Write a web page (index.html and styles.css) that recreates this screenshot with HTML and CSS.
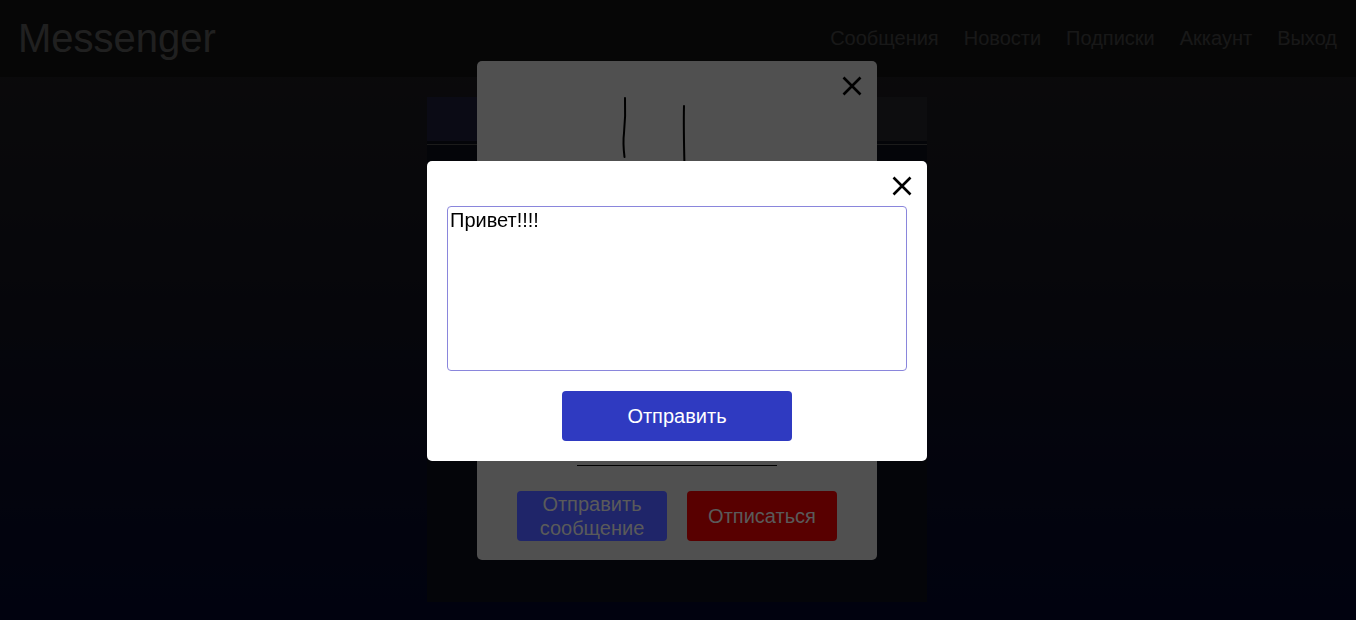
FILE: index.html
```html
<!DOCTYPE html>
<html lang="ru">
<head>
<meta charset="utf-8">
<title>Messenger</title>
<link rel="stylesheet" href="styles.css">
</head>
<body>
<header class="topbar">
  <div class="brand">Messenger</div>
  <nav class="nav">
    <a href="#">Сообщения</a>
    <a href="#">Новости</a>
    <a href="#">Подписки</a>
    <a href="#">Аккаунт</a>
    <a href="#">Выход</a>
  </nav>
</header>

<main class="content">
  <section class="card">
    <div class="card-tabs">
      <div class="card-tab card-tab-active"></div>
      <div class="card-tab"></div>
    </div>
    <div class="card-line"></div>
    <div class="card-body"></div>
  </section>
</main>

<div class="overlay">
  <div class="modal profile-modal">
    <button class="close" aria-label="Закрыть">
      <svg width="24" height="24" viewBox="0 0 24 24"><path d="M3.5 3.5 L20.5 20.5 M20.5 3.5 L3.5 20.5" stroke="#000" stroke-width="2.6" fill="none"/></svg>
    </button>
    <svg class="avatar" width="360" height="357" viewBox="0 0 360 357">
      <path d="M128 17 C128.5 30 128 42 127 52 C126 60 126.5 68 127.5 76" stroke="#000" stroke-width="2" fill="none" stroke-linecap="round"/>
      <path d="M187 25 C186.5 45 187 65 187.5 85 C188 100 187.5 115 187 130" stroke="#000" stroke-width="2" fill="none" stroke-linecap="round"/>
    </svg>
    <div class="profile-name">Кузнецов</div>
    <div class="profile-actions">
      <button class="btn btn-blue">Отправить сообщение</button>
      <button class="btn btn-red">Отписаться</button>
    </div>
  </div>
</div>

<div class="overlay">
  <div class="modal message-modal">
    <button class="close" aria-label="Закрыть">
      <svg width="24" height="24" viewBox="0 0 24 24"><path d="M3.5 3.5 L20.5 20.5 M20.5 3.5 L3.5 20.5" stroke="#000" stroke-width="2.6" fill="none"/></svg>
    </button>
    <textarea class="message-input">Привет!!!!</textarea>
    <button class="send-btn">Отправить</button>
  </div>
</div>
</body>
</html>
```

FILE: styles.css
```css
html, body {
  margin: 0;
  padding: 0;
}

body {
  min-height: 100vh;
  font-family: "Liberation Sans", Arial, sans-serif;
  background: linear-gradient(to bottom, #2e2c30 0%, #1c1c2c 45%, #040a3e 100%);
  overflow: hidden;
}

.topbar {
  height: 77px;
  box-sizing: border-box;
  display: flex;
  align-items: center;
  justify-content: space-between;
  padding: 0 19px 0 18px;
  background: #1a1a1a;
}

.brand {
  font-size: 40px;
  color: #828282;
}

.nav {
  display: flex;
  gap: 25px;
  font-size: 20px;
}

.nav a {
  color: #626262;
  text-decoration: none;
}

.content {
  display: flex;
  justify-content: center;
  padding: 20px 2px 0 0;
}

.card {
  width: 500px;
  height: 505px;
  display: flex;
  flex-direction: column;
  background: #121424;
}

.card-tabs {
  display: flex;
  height: 44px;
}

.card-tab {
  flex: 1;
  background: #36363c;
}

.card-tab-active {
  background: #2c2c54;
}

.card-line {
  margin-top: 3px;
  height: 1px;
  background: #6c6c6c;
}

.card-body {
  flex: 1;
}

.overlay {
  position: fixed;
  inset: 0;
  box-sizing: border-box;
  padding: 2px 2px 0 0;
  background: rgba(0, 0, 0, 0.5);
  display: flex;
  align-items: center;
  justify-content: center;
}

.modal {
  position: relative;
  box-sizing: border-box;
  border-radius: 5px;
  display: flex;
  flex-direction: column;
  align-items: center;
}

.close {
  position: absolute;
  top: 13px;
  right: 13px;
  width: 24px;
  height: 24px;
  padding: 0;
  border: none;
  background: none;
  cursor: pointer;
}

.close svg {
  display: block;
}

.profile-modal {
  width: 400px;
  padding: 20px 20px 19px;
  margin-bottom: 1px;
  background: #a0a0a0;
}

.avatar {
  display: block;
}

.profile-name {
  width: 200px;
  text-align: center;
  font-size: 20px;
  line-height: 23px;
  padding-bottom: 4px;
  border-bottom: 1px solid #000;
  color: #000;
}

.profile-actions {
  display: flex;
  gap: 20px;
  margin-top: 25px;
}

.btn {
  width: 150px;
  height: 50px;
  border: none;
  border-radius: 4px;
  padding: 0 10px;
  font-family: "Liberation Sans", Arial, sans-serif;
  font-size: 20px;
  line-height: 24px;
  color: #b4b4b4;
}

.btn-blue {
  background: #3e4ad2;
}

.btn-red {
  background: #b00000;
}

.message-modal {
  width: 500px;
  height: 300px;
  padding: 45px 20px 20px;
  background: #ffffff;
}

.message-input {
  width: 460px;
  height: 165px;
  box-sizing: border-box;
  border: 1px solid #8a86dc;
  border-radius: 4px;
  padding: 2px;
  margin: 0;
  font-family: "Liberation Sans", Arial, sans-serif;
  font-size: 20px;
  line-height: 23px;
  color: #000;
  resize: none;
  outline: none;
}

.send-btn {
  margin-top: 20px;
  width: 230px;
  height: 50px;
  border: none;
  border-radius: 4px;
  background: #2f3ac1;
  color: #ffffff;
  font-family: "Liberation Sans", Arial, sans-serif;
  font-size: 20px;
}
```
